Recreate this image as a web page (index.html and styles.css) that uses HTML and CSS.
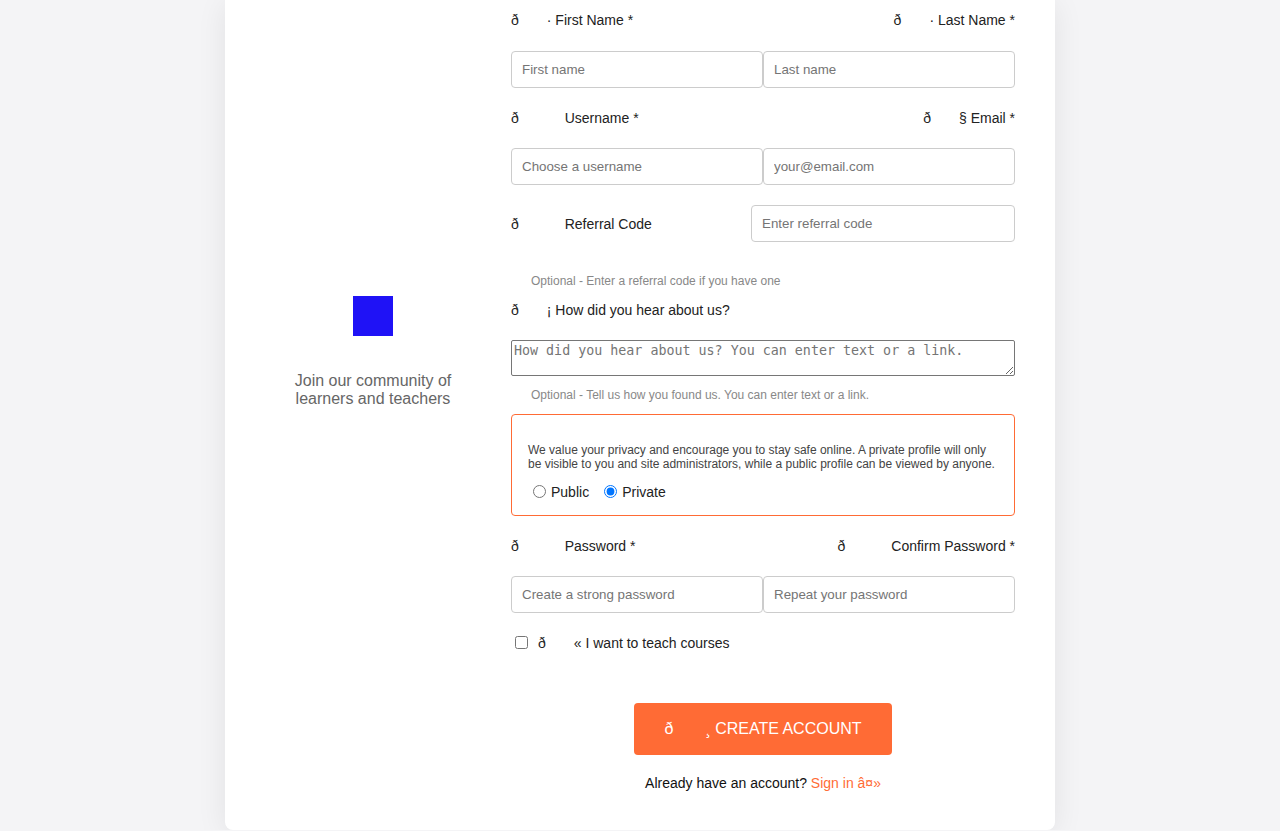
FILE: index.html
```html
<!DOCTYPE html>
<html lang="en">
<head>
<meta charset="utf-8">
<title>Create Account</title>
<link rel="stylesheet" href="styles.css">
</head>
<body>
<div class="card">
  <aside class="intro">
    <div class="logo"></div>
    <p class="tagline">Join our community of learners and teachers</p>
  </aside>
  <form class="form">
    <div class="label-row">
      <label class="lbl">ð<span class="c2"></span>· First Name *</label>
      <label class="lbl">ð<span class="c2"></span>· Last Name *</label>
    </div>
    <div class="input-row">
      <input class="field" type="text" placeholder="First name">
      <input class="field" type="text" placeholder="Last name">
    </div>

    <div class="label-row">
      <label class="lbl">ð<span class="c3"></span> Username *</label>
      <label class="lbl">ð<span class="c2"></span>§ Email *</label>
    </div>
    <div class="input-row">
      <input class="field" type="text" placeholder="Choose a username">
      <input class="field" type="email" placeholder="your@email.com">
    </div>

    <div class="referral-row">
      <label class="lbl">ð<span class="c3"></span> Referral Code</label>
      <input class="field referral" type="text" placeholder="Enter referral code">
    </div>
    <p class="hint">Optional - Enter a referral code if you have one</p>

    <div class="label-row">
      <label class="lbl">ð<span class="c2"></span>¡ How did you hear about us?</label>
    </div>
    <textarea class="area" placeholder="How did you hear about us? You can enter text or a link."></textarea>
    <p class="hint">Optional - Tell us how you found us. You can enter text or a link.</p>

    <div class="privacy">
      <p class="privacy-text">We value your privacy and encourage you to stay safe online. A private profile will only be visible to you and site administrators, while a public profile can be viewed by anyone.</p>
      <div class="radio-row">
        <label class="radio"><input type="radio" name="vis" value="public">Public</label>
        <label class="radio"><input type="radio" name="vis" value="private" checked>Private</label>
      </div>
    </div>

    <div class="label-row">
      <label class="lbl">ð<span class="c3"></span> Password *</label>
      <label class="lbl">ð<span class="c3"></span> Confirm Password *</label>
    </div>
    <div class="input-row">
      <input class="field" type="password" placeholder="Create a strong password">
      <input class="field" type="password" placeholder="Repeat your password">
    </div>

    <label class="check-row"><input type="checkbox"><span class="check-text">ð<span class="c2"></span>« I want to teach courses</span></label>

    <button class="btn" type="button">ð<span class="c2"></span>¸ CREATE ACCOUNT</button>

    <p class="signin">Already have an account? <a class="link" href="#">Sign in â¤»</a></p>
  </form>
</div>
</body>
</html>
```
FILE: styles.css
```css
html, body {
  margin: 0;
  padding: 0;
}
body {
  background: #f4f4f6;
  font-family: "Liberation Sans", Arial, sans-serif;
  color: #222;
}
.card {
  width: 830px;
  box-sizing: border-box;
  margin: 0 auto;
  background: #fff;
  border-radius: 0 0 8px 8px;
  box-shadow: 0 4px 30px rgba(0, 0, 0, 0.08);
  display: grid;
  grid-template-columns: 216px 504px;
  column-gap: 30px;
  padding: 0 40px 39px;
}
.intro {
  padding: 296px 20px 0;
  display: flex;
  flex-direction: column;
  align-items: center;
}
.logo {
  width: 40px;
  height: 40px;
  background: #1f12f6;
}
.tagline {
  margin: 36px 0 0;
  font-size: 16px;
  line-height: 18px;
  color: #666;
  text-align: center;
}
.form {
  display: flex;
  flex-direction: column;
  padding-top: 10px;
}
.c2, .c3 {
  display: inline-block;
}
.c2 { width: 2em; }
.c3 { width: 3em; }
.label-row {
  display: flex;
  justify-content: space-between;
  align-items: center;
  height: 20px;
  margin-bottom: 20px;
}
.label-row:first-child {
  margin-bottom: 21px;
}
.lbl {
  font-size: 14px;
  line-height: 20px;
  color: #222;
  white-space: nowrap;
}
.input-row {
  display: grid;
  grid-template-columns: 1fr 1fr;
  margin-bottom: 20px;
}
.field {
  height: 37px;
  box-sizing: border-box;
  border: 1px solid #ccc;
  border-radius: 4px;
  padding: 0 10px;
  margin: 0;
  font: 13.333px "Liberation Sans", Arial, sans-serif;
  color: #333;
  background: #fff;
  min-width: 0;
}
.field::placeholder {
  color: #757575;
}
.referral-row {
  display: flex;
  justify-content: space-between;
  align-items: center;
  margin-bottom: 20px;
}
.referral {
  width: 264px;
}
.hint {
  margin: 12px 0;
  padding-left: 20px;
  font-size: 12px;
  line-height: 14px;
  color: #888;
}
.area {
  display: block;
  width: 100%;
  height: 36px;
  box-sizing: border-box;
  margin: 0;
  padding: 2px;
  border: 1px solid #767676;
  border-radius: 2px;
  font: 13.333px "DejaVu Sans Mono", "Liberation Mono", monospace;
  resize: vertical;
}
.area::placeholder {
  color: #757575;
}
.privacy {
  border: 1px solid #ff6b35;
  border-radius: 4px;
  padding: 16px 16px 14px;
  margin-bottom: 20px;
}
.privacy-text {
  margin: 13px 0 11px;
  font-size: 12px;
  line-height: 13.8px;
  color: #444;
}
.radio-row {
  display: flex;
  align-items: center;
  height: 18px;
}
.radio {
  display: inline-flex;
  align-items: center;
  font-size: 14px;
  color: #222;
  margin-right: 10px;
}
.radio input {
  margin: 0 5px 0 5px;
  width: 13px;
  height: 13px;
}
.check-row {
  display: flex;
  align-items: center;
  height: 20px;
  margin-bottom: 50px;
  font-size: 14px;
  color: #222;
}
.check-row input {
  margin: 0 3px 0 4px;
  width: 13px;
  height: 13px;
}
.check-text {
  margin-left: 7px;
}
.btn {
  align-self: center;
  height: 52px;
  padding: 0 30px;
  border: none;
  border-radius: 4px;
  background: #ff6b35;
  color: #fff;
  font: 16px "Liberation Sans", Arial, sans-serif;
  margin-bottom: 20px;
  cursor: pointer;
}
.signin {
  margin: 0;
  text-align: center;
  font-size: 14px;
  line-height: 16px;
  color: #111;
}
.link {
  color: #ff6b35;
  text-decoration: none;
}
```
